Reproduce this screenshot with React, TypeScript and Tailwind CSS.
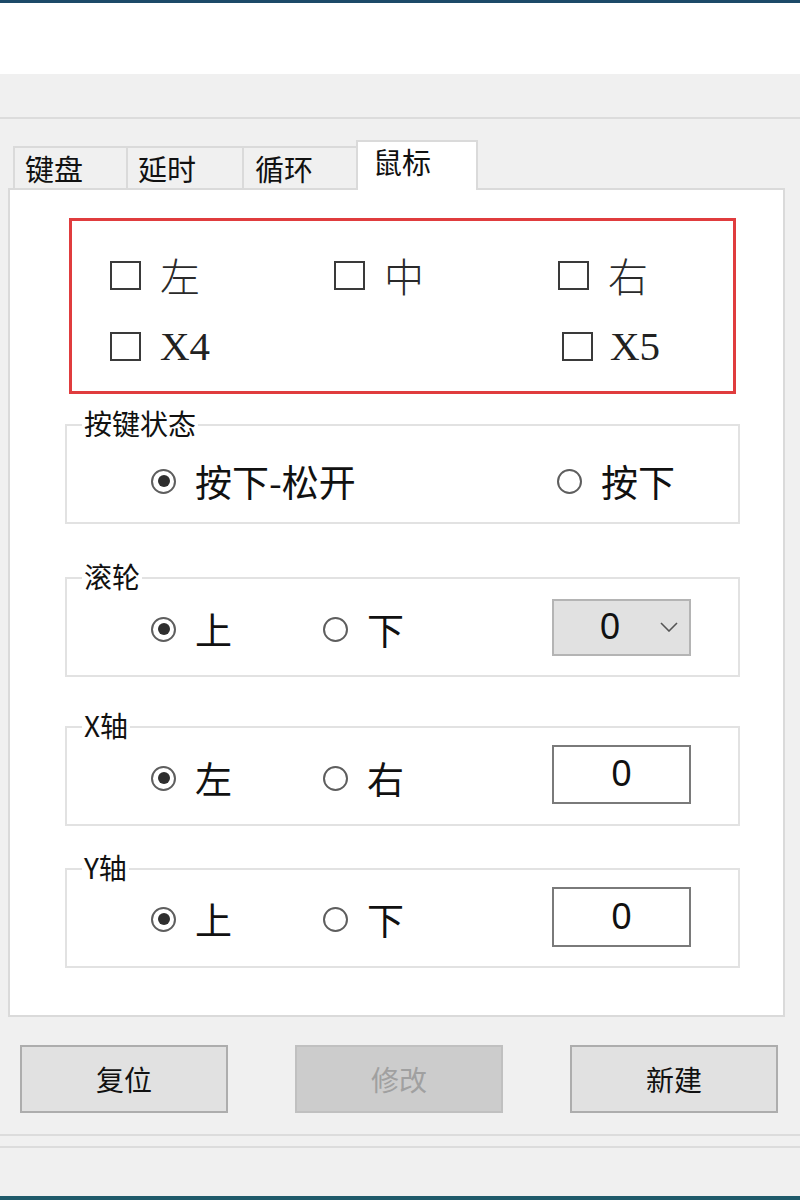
import React from "react";

function Radio({ checked }: { checked?: boolean }) {
  return (
    <span className="w-[25px] h-[25px] rounded-full border-2 border-[#5e5e5e] bg-white flex items-center justify-center shrink-0">
      {checked && <span className="w-[12px] h-[12px] rounded-full bg-[#2e2e2e]" />}
    </span>
  );
}

function Check() {
  return <span className="w-[31px] h-[29px] border-2 border-[#3a3a3a] bg-white shrink-0" />;
}

function Group({
  label,
  className,
  children,
}: {
  label: string;
  className: string;
  children: React.ReactNode;
}) {
  return (
    <div className={"relative ml-[55px] w-[675px] h-[100px] border-2 border-[#e2e2e2] flex items-center " + className}>
      <span className="absolute left-[15px] top-[-20px] bg-white px-[2px] text-[28px] leading-[34px] text-[#111]">
        {label}
      </span>
      {children}
    </div>
  );
}

function RadioItem({ checked, label, w }: { checked?: boolean; label: string; w: string }) {
  return (
    <div className={"flex items-center gap-[19px] shrink-0 " + w}>
      <Radio checked={checked} />
      <span className="text-[37px] leading-[40px] text-[#111]">{label}</span>
    </div>
  );
}

export default function App() {
  return (
    <div className="w-[800px] h-[1200px] bg-[#f0f0f0] flex flex-col font-['Noto_Sans_CJK_SC','Noto_Sans',sans-serif] text-[#111]">
      <div className="h-[3px] bg-[#1d4a68]" />
      <div className="h-[71px] bg-white" />
      <div className="h-[45px] border-b-2 border-[#dcdcdc]" />

      <div className="mt-[22px] h-[47px] flex items-end pl-[13px]">
        <div className="w-[113px] h-[42px] border-t-2 border-l-2 border-[#dadada] pl-[10px] text-[29px] leading-[40px]">键盘</div>
        <div className="w-[116px] h-[42px] border-t-2 border-l-2 border-[#dadada] pl-[10px] text-[29px] leading-[40px]">延时</div>
        <div className="w-[114px] h-[42px] border-t-2 border-l-2 border-[#dadada] pl-[11px] text-[29px] leading-[40px]">循环</div>
        <div className="relative z-10 -mb-[2px] w-[122px] h-[50px] bg-white border-t-2 border-l-2 border-r-2 border-[#dadada] pl-[15px] text-[29px] leading-[38px]">鼠标</div>
      </div>

      <div className="ml-[8px] w-[777px] h-[829px] border-2 border-[#dadada] bg-white flex flex-col">
        <div className="ml-[59px] mt-[28px] w-[667px] h-[176px] border-[3px] border-[#e03c3e] pt-[34px] pl-[38px] flex flex-col gap-[31px]">
          <div className="flex h-[40px] items-center">
            <div className="w-[224px] shrink-0 flex items-center gap-[19px]">
              <Check />
              <span className="text-[40px] leading-[40px] font-light text-[#2a2a2a]">左</span>
            </div>
            <div className="w-[224px] shrink-0 flex items-center gap-[19px]">
              <Check />
              <span className="text-[40px] leading-[40px] font-light text-[#2a2a2a]">中</span>
            </div>
            <div className="w-[150px] shrink-0 flex items-center gap-[19px]">
              <Check />
              <span className="text-[40px] leading-[40px] font-light text-[#2a2a2a]">右</span>
            </div>
          </div>
          <div className="flex h-[40px] items-center">
            <div className="w-[452px] shrink-0 flex items-center gap-[19px]">
              <Check />
              <span className="font-['Liberation_Serif',serif] text-[41px] leading-[40px] text-[#222]">X4</span>
            </div>
            <div className="w-[150px] shrink-0 flex items-center gap-[17px]">
              <Check />
              <span className="font-['Liberation_Serif',serif] text-[41px] leading-[40px] text-[#222]">X5</span>
            </div>
          </div>
        </div>

        <Group label="按键状态" className="mt-[30px] pl-[84px] pt-[14px]">
          <RadioItem checked label="按下-松开" w="w-[406px]" />
          <RadioItem label="按下" w="w-[150px]" />
        </Group>

        <Group label="滚轮" className="mt-[53px] pl-[84px] pt-[4px]">
          <RadioItem checked label="上" w="w-[172px]" />
          <RadioItem label="下" w="w-[229px]" />
          <div className="w-[139px] h-[57px] -mt-[4px] bg-[#e1e1e1] border-2 border-[#b4b4b4] flex items-center pl-[46px]">
            <span className="font-['Liberation_Sans',sans-serif] text-[36px] leading-[40px] text-[#111]">0</span>
            <svg className="ml-[40px]" width="18" height="10" viewBox="0 0 18 10">
              <path d="M1 1 L9 9 L17 1" fill="none" stroke="#555" strokeWidth="1.6" />
            </svg>
          </div>
        </Group>

        <Group label="X轴" className="mt-[49px] pl-[84px] pt-[4px]">
          <RadioItem checked label="左" w="w-[172px]" />
          <RadioItem label="右" w="w-[229px]" />
          <div className="w-[139px] h-[59px] -mt-[8px] bg-white border-2 border-[#7a7a7a] flex items-center justify-center">
            <span className="font-['Liberation_Sans',sans-serif] text-[36px] leading-[40px] text-[#111]">0</span>
          </div>
        </Group>

        <Group label="Y轴" className="mt-[42px] pl-[84px] pt-[2px]">
          <RadioItem checked label="上" w="w-[172px]" />
          <RadioItem label="下" w="w-[229px]" />
          <div className="w-[139px] h-[60px] -mt-[4px] bg-white border-2 border-[#7a7a7a] flex items-center justify-center">
            <span className="font-['Liberation_Sans',sans-serif] text-[36px] leading-[40px] text-[#111]">0</span>
          </div>
        </Group>
      </div>

      <div className="mt-[28px] flex pl-[20px] gap-[67px]">
        <div className="w-[208px] h-[68px] bg-[#e1e1e1] border-2 border-[#adadad] flex items-center justify-center text-[28px] text-[#111]">复位</div>
        <div className="w-[208px] h-[68px] bg-[#cccccc] border-2 border-[#c0c0c0] flex items-center justify-center text-[28px] text-[#a0a0a0]">修改</div>
        <div className="w-[208px] h-[68px] bg-[#e1e1e1] border-2 border-[#adadad] flex items-center justify-center text-[28px] text-[#111]">新建</div>
      </div>

      <div className="mt-[21px] h-[2px] bg-[#dcdcdc]" />
      <div className="mt-[10px] h-[2px] bg-[#dcdcdc]" />
      <div className="flex-1" />
      <div className="h-[4px] bg-[#1f5a6a]" />
    </div>
  );
}
